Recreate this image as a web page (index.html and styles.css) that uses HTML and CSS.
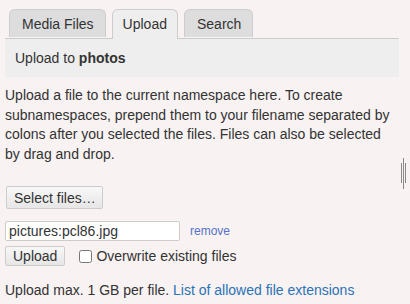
FILE: index.html
```html
<!DOCTYPE html>
<html lang="en">
<head>
  <meta charset="UTF-8">
  <title>Media Manager</title>
  <link rel="stylesheet" href="styles.css">
</head>
<body>

  <div class="media-panel">
    <ul class="tabs">
      <li><a href="#">Media Files</a></li>
      <li class="active"><a href="#">Upload</a></li>
      <li><a href="#">Search</a></li>
    </ul>

    <div class="panel-header">Upload to <strong>photos</strong></div>

    <div class="panel-body">
      <p class="intro">Upload a file to the current namespace here. To create subnamespaces, prepend them to your filename separated by colons after you selected the files. Files can also be selected by drag and drop.</p>

      <button class="btn btn-select">Select files…</button>

      <div class="file-row">
        <input class="file-name" type="text" value="pictures:pcl86.jpg">
        <a class="remove" href="#">remove</a>
      </div>

      <div class="action-row">
        <button class="btn btn-upload">Upload</button>
        <label class="overwrite"><input type="checkbox"> Overwrite existing files</label>
      </div>

      <p class="limits">Upload max. 1 GB per file. <a href="#">List of allowed file extensions</a></p>
    </div>

    <div class="grip"><span></span><span class="long"></span><span></span></div>
  </div>

</body>
</html>
```

FILE: styles.css
```css
body {
  background: #f8f2f2;
  margin: 0;
  color: #333;
  font-family: 'Liberation Sans', Arial, sans-serif;
  font-size: 14px;
}

.media-panel {
  position: relative;
  padding: 9px 11px 0 5px;
}

.tabs {
  display: flex;
  gap: 6px;
  list-style: none;
  margin: 0 0 0 4px;
  padding: 0;
}

.tabs li a {
  display: block;
  height: 28px;
  line-height: 28px;
  padding: 0 11px 0 12px;
  box-sizing: border-box;
  background: #ddd;
  border: 1px solid #ccc;
  border-bottom: none;
  border-radius: 6px 6px 0 0;
  color: #333;
  text-decoration: none;
}

.tabs li.active a {
  background: #eee;
  height: 30px;
  margin-bottom: -1px;
  padding: 0 10px;
  position: relative;
}

.panel-header {
  background: #eee;
  border-top: 1px solid #ccc;
  height: 38px;
  line-height: 38px;
  padding: 0 10px;
}

.panel-body {
  padding-top: 9px;
}

.intro {
  margin: 0;
  line-height: 19.5px;
}

.btn {
  font-family: 'Liberation Sans', Arial, sans-serif;
  font-size: 14px;
  color: #333;
  background: linear-gradient(#f8f8f8, #e6e6e6);
  border: 1px solid #ccc;
  border-radius: 2px;
}

.btn-select {
  margin: 22px 0 0 1px;
  height: 23px;
  padding: 0 6px 0 7px;
}

.file-row {
  display: flex;
  align-items: center;
  margin-top: 12px;
}

.file-name {
  width: 175px;
  height: 20px;
  box-sizing: border-box;
  border: 1px solid #ccc;
  border-radius: 2px;
  padding: 0 3px;
  font-family: 'Liberation Sans', Arial, sans-serif;
  font-size: 14px;
  color: #333;
  background: #fff;
}

.remove {
  margin-left: 10px;
  font-size: 12px;
  color: #5573c8;
  text-decoration: none;
}

.action-row {
  display: flex;
  align-items: center;
  margin-top: 5px;
}

.btn-upload {
  height: 20px;
  padding: 0 7px;
}

.overwrite {
  display: flex;
  align-items: center;
  margin-left: 14px;
}

.overwrite input {
  margin: 0 4px 0 0;
  width: 13px;
  height: 13px;
}

.limits {
  margin: 15px 0 0;
  line-height: 19.5px;
}

.limits a {
  color: #2b73b7;
  text-decoration: none;
}

.grip {
  position: absolute;
  left: 401px;
  top: 157px;
  display: flex;
  align-items: center;
  gap: 1px;
  height: 32px;
}

.grip span {
  width: 1px;
  height: 20px;
  background: #888;
}

.grip .long {
  height: 31px;
}
```
